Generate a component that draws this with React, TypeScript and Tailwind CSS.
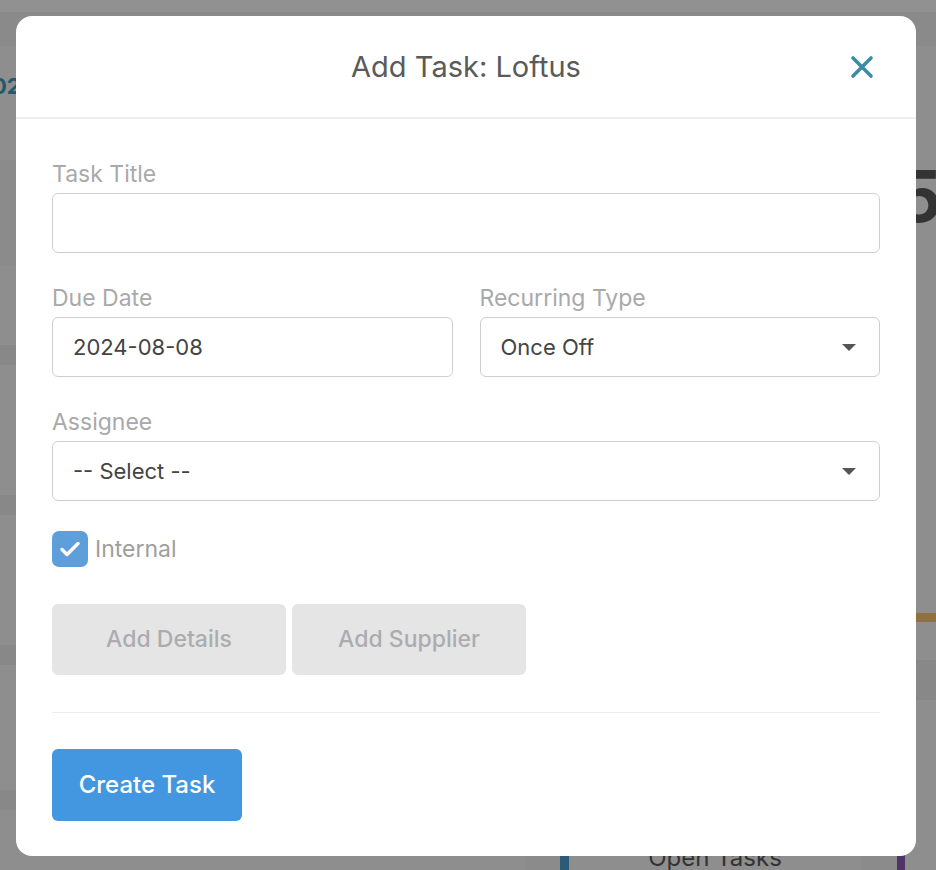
import React from 'react';

const font = { fontFamily: 'Inter, Roboto, "Liberation Sans", sans-serif' };

const ChevronDown: React.FC = () => (
  <svg width="16" height="9" viewBox="0 0 16 9" className="shrink-0">
    <path d="M1 1h14L8 8z" fill="#555" />
  </svg>
);

const Label: React.FC<{ children: React.ReactNode }> = ({ children }) => (
  <label className="block text-[23px] leading-[28px] text-[#a9a9a9] mb-[5px]">{children}</label>
);

const Field: React.FC<{ value?: string; select?: boolean }> = ({ value, select }) => (
  <div className="h-[60px] w-full rounded-[6px] border border-[#cfcfcf] bg-white flex items-center justify-between pl-5 pr-[22px]">
    <span className="text-[22px] text-[#444]">{value}</span>
    {select && <ChevronDown />}
  </div>
);

// the page behind the dialog, dimmed
const Backdrop: React.FC = () => (
  <div className="absolute inset-0 bg-[#8e8e8e] overflow-hidden">
    <div className="h-[12px] bg-[#919191]" />
    <div className="h-[34px] bg-[#8a8a8a]" />
    <div className="absolute left-[-8px] top-[70px] text-[22px] font-bold text-[#24586b]">02</div>
    <div className="absolute left-0 top-[160px] w-[16px] h-[105px] bg-[#8b8b8b]" />
    <div className="absolute left-0 top-[345px] w-[16px] h-[20px] bg-[#888]" />
    <div className="absolute left-0 top-[495px] w-[16px] h-[20px] bg-[#888]" />
    <div className="absolute left-0 top-[645px] w-[16px] h-[20px] bg-[#888]" />
    <div className="absolute left-0 top-[790px] w-[16px] h-[20px] bg-[#888]" />
    <div className="absolute left-[896px] top-[160px] text-[72px] leading-none font-bold text-[#333]">53</div>
    <div className="absolute left-[916px] top-[613px] w-[20px] h-[9px] bg-[#8e7043]" />
    <div className="absolute left-[916px] top-[660px] w-[20px] h-[40px] bg-[#888]" />
    <div className="absolute left-[525px] top-[856px] w-[35px] h-[14px] bg-[#8b8b8b]" />
    <div className="absolute left-[560px] top-[856px] w-[9px] h-[14px] bg-[#2d5a75]" />
    <div className="absolute left-[569px] top-[840px] w-[292px] h-[30px] flex justify-center text-[24px] text-[#333]">Open Tasks</div>
    <div className="absolute left-[861px] top-[856px] w-[36px] h-[14px] bg-[#8b8b8b]" />
    <div className="absolute left-[897px] top-[850px] w-[8px] h-[20px] bg-[#4f3566]" />
  </div>
);

export default function App() {
  return (
    <div className="relative w-[936px] h-[870px] overflow-hidden" style={font}>
      <Backdrop />
      <div className="relative pt-[16px] pl-[16px]">
        <div className="bg-white rounded-[16px] w-[900px] h-[840px] flex flex-col">
          <div className="relative h-[103px] border-b-2 border-[#eeeeee] flex items-center justify-center">
            <h2 className="text-[29px] text-[#5a5a5a] font-normal">Add Task: Loftus</h2>
            <button className="absolute right-[40px] top-[37px] w-[28px] h-[28px] flex items-center justify-center">
              <svg width="24" height="24" viewBox="0 0 24 24">
                <path d="M3 3l18 18M21 3L3 21" stroke="#3a8ca7" strokeWidth="3.6" strokeLinecap="round" />
              </svg>
            </button>
          </div>
          <div className="px-[36px] pt-[41px]">
            <Label>Task Title</Label>
            <Field />
            <div className="grid grid-cols-2 gap-[27px] mt-[31px]">
              <div>
                <Label>Due Date</Label>
                <Field value="2024-08-08" />
              </div>
              <div>
                <Label>Recurring Type</Label>
                <Field value="Once Off" select />
              </div>
            </div>
            <div className="mt-[31px]">
              <Label>Assignee</Label>
              <Field value="-- Select --" select />
            </div>
            <div className="flex items-center mt-[30px] gap-[7px]">
              <div className="w-[36px] h-[36px] rounded-[7px] bg-[#5e9fdb] flex items-center justify-center">
                <svg width="22" height="18" viewBox="0 0 22 18">
                  <path d="M3 9.5l5 5L19 3.5" stroke="white" strokeWidth="3.4" fill="none" strokeLinecap="round" strokeLinejoin="round" />
                </svg>
              </div>
              <span className="text-[23px] text-[#9e9e9e]">Internal</span>
            </div>
            <div className="flex gap-[6px] mt-[37px]">
              <button className="w-[234px] h-[71px] rounded-[6px] bg-[#e5e5e5] text-[23px] font-medium text-[#acacb0]">Add Details</button>
              <button className="w-[234px] h-[71px] rounded-[6px] bg-[#e5e5e5] text-[23px] font-medium text-[#acacb0]">Add Supplier</button>
            </div>
            <div className="h-px bg-[#ececec] mt-[37px]" />
            <button className="mt-[36px] w-[190px] h-[72px] rounded-[6px] bg-[#4396e0] text-white text-[24px] font-medium">Create Task</button>
          </div>
        </div>
      </div>
    </div>
  );
}
